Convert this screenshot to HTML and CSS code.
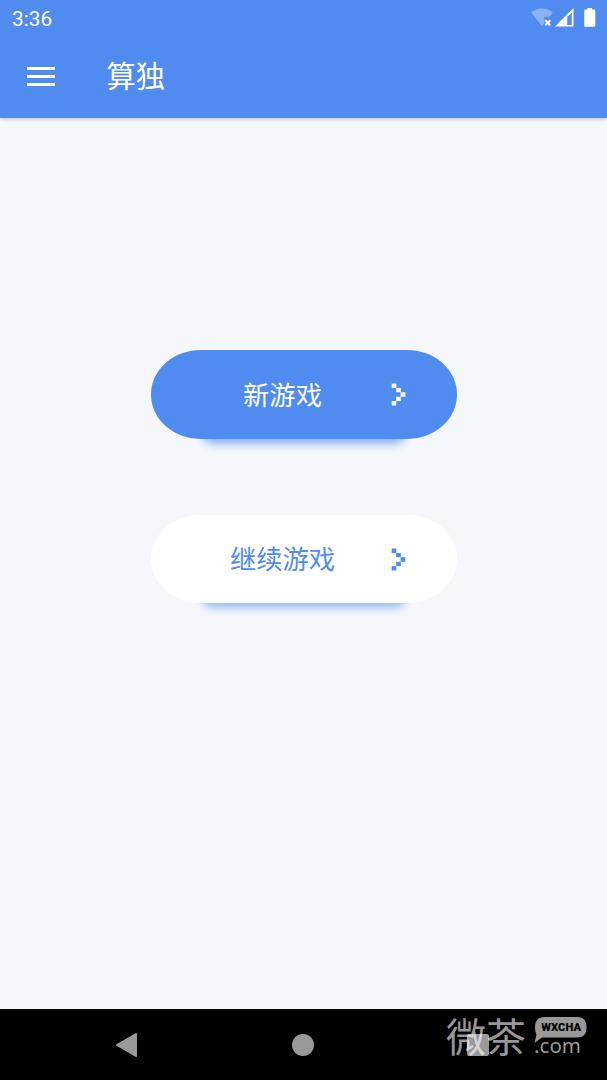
FILE: index.html
```html
<!DOCTYPE html>
<html lang="zh-CN">
<head>
    <meta charset="UTF-8">
    <meta name="viewport" content="width=device-width, initial-scale=1.0">
    <title>算独</title>
    <link rel="stylesheet" href="styles.css">
</head>
<body>
    <header class="header">
        <div class="status-bar">
            <span class="clock">3:36</span>
            <svg class="status-icons" width="66" height="20" viewBox="0 0 66 20">
                <path d="M0.2 4.5C6.5 -0.8 15.5 -0.8 21.8 4.5L18.6 8.7H13.4V15.4L11 18Z" fill="#fff" opacity="0.35"/>
                <path d="M14.3 12.3L19.3 17.3M19.3 12.3L14.3 17.3" stroke="#fff" stroke-width="2"/>
                <path fill-rule="evenodd" d="M24 18.5L42.5 0V18.5ZM36.2 9V17H40.8V4.8Z" fill="#fff"/>
                <path d="M56.5 0H61V1.5H63C63.8 1.5 64.3 2 64.3 2.8V17.5C64.3 18.3 63.8 18.8 63 18.8H54.5C53.7 18.8 53.2 18.3 53.2 17.5V2.8C53.2 2 53.7 1.5 54.5 1.5H56.5Z" fill="#fff"/>
            </svg>
        </div>
        <div class="toolbar">
            <div class="menu-icon">
                <span></span>
                <span></span>
                <span></span>
            </div>
            <h1>算独</h1>
        </div>
    </header>

    <main class="menu">
        <button class="button primary">
            <span class="label">新游戏</span>
            <svg class="arrow" width="15" height="23" viewBox="0 0 15 23">
                <path d="M0.7 0.4H5.3V5H0.7ZM5.2 4.9H9.8V9.3H5.2ZM9.6 9.2H14.4V13.8H9.6ZM5.2 13.7H9.8V18H5.2ZM0.7 17.9H5.3V22.6H0.7Z" fill="currentColor"/>
            </svg>
        </button>
        <button class="button secondary">
            <span class="label">继续游戏</span>
            <svg class="arrow" width="15" height="23" viewBox="0 0 15 23">
                <path d="M0.7 0.4H5.3V5H0.7ZM5.2 4.9H9.8V9.3H5.2ZM9.6 9.2H14.4V13.8H9.6ZM5.2 13.7H9.8V18H5.2ZM0.7 17.9H5.3V22.6H0.7Z" fill="currentColor"/>
            </svg>
        </button>
    </main>

    <footer class="nav-bar">
        <svg class="nav-back" width="22" height="26" viewBox="0 0 22 26">
            <path d="M1 13L20 2V24Z" fill="#999" stroke="#999" stroke-width="2" stroke-linejoin="round"/>
        </svg>
        <span class="nav-home"></span>
        <span class="nav-recent"></span>
        <div class="watermark">
            <span class="brand">微茶</span>
            <svg class="bubble" width="54" height="27" viewBox="0 0 54 27">
                <path d="M11 0H43C50 0 52.5 4 52.5 10.3C52.5 17 50 20.5 43 20.5H8L0.5 26L2.5 17.5C1.5 16 1 13 1 10.3C1 4 4 0 11 0Z" fill="#999"/>
            </svg>
            <span class="badge">WXCHA</span>
            <span class="domain">.com</span>
        </div>
    </footer>
</body>
</html>
```

FILE: styles.css
```css
body {
    font-family: Roboto, 'Noto Sans CJK SC', sans-serif;
    margin: 0;
    background: #f5f7fb;
    display: flex;
    flex-direction: column;
    height: 100vh;
    overflow: hidden;
}

.header {
    height: 118px;
    background: #508bef;
    color: #ffffff;
    box-shadow: 0 1px 4px rgba(0, 0, 0, 0.22);
}

.status-bar {
    display: flex;
    justify-content: space-between;
    align-items: center;
    height: 35px;
    padding: 0 10px 0 12px;
}

.clock {
    font-size: 20.8px;
    line-height: 24px;
    margin-top: 3px;
}

.status-icons {
    margin-top: 1px;
}

.toolbar {
    display: flex;
    align-items: center;
    height: 83px;
    padding-left: 27px;
}

.menu-icon {
    display: flex;
    flex-direction: column;
    gap: 5px;
    width: 28px;
}

.menu-icon span {
    height: 3px;
    background: #ffffff;
}

h1 {
    margin: 1px 0 0 51.5px;
    font-size: 29.3px;
    font-weight: 400;
    line-height: 40px;
}

.menu {
    flex: 1;
    display: flex;
    flex-direction: column;
    align-items: center;
    gap: 76px;
    padding-top: 232.3px;
}

.button {
    position: relative;
    display: flex;
    align-items: center;
    box-sizing: border-box;
    width: 306px;
    height: 88.5px;
    padding: 0 51px 0 72px;
    border: none;
    border-radius: 50px / 44.25px;
    font-family: inherit;
    font-size: 26.3px;
}

/* short soft shadow under the middle of the pill */
.button::after {
    content: '';
    position: absolute;
    z-index: -1;
    left: 50px;
    right: 50px;
    bottom: -5px;
    height: 26px;
    border-radius: 14px;
    background: #508bef;
    opacity: 0.65;
    filter: blur(4px);
}

.primary {
    background: #508bef;
    color: #ffffff;
}

.secondary {
    background: #ffffff;
    color: #508bef;
}

.secondary::after {
    opacity: 0.55;
}

.label {
    flex: 1;
    text-align: center;
    padding: 0 48px 3px 0;
}

.nav-bar {
    position: relative;
    display: flex;
    align-items: center;
    justify-content: space-between;
    box-sizing: border-box;
    height: 71px;
    padding: 0 118px 0 116px;
    background: #000000;
}

.nav-home {
    width: 22px;
    height: 22px;
    border-radius: 50%;
    background: #999999;
}

.nav-recent {
    width: 22px;
    height: 22px;
    border-radius: 2px;
    background: #999999;
}

/* site mark laid over the navigation bar */
.watermark {
    position: absolute;
    right: 19px;
    top: 8px;
    width: 142px;
    height: 44px;
}

.brand {
    position: absolute;
    left: 0;
    top: -2px;
    font-family: 'Noto Sans CJK SC', sans-serif;
    font-weight: 400;
    font-size: 40px;
    line-height: 40px;
    color: rgba(255, 255, 255, 0.6);
}

.bubble {
    position: absolute;
    right: 0;
    top: 0;
}

.badge {
    position: absolute;
    right: 7px;
    top: 5px;
    font-size: 11.2px;
    font-weight: 900;
    line-height: 11px;
    color: #000000;
}

.domain {
    position: absolute;
    right: 7px;
    top: 19px;
    font-family: 'Noto Sans', sans-serif;
    font-size: 20.5px;
    line-height: 18px;
    color: #999999;
}
```
